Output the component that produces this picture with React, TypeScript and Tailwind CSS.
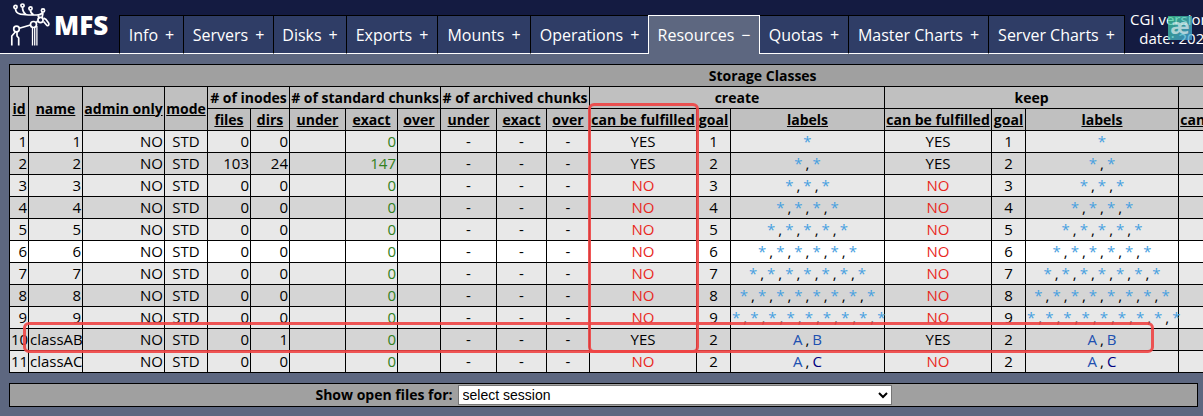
import clsx from "clsx";

interface Tab {
  name: string;
  width: string;
  active?: boolean;
}

interface StorageClass {
  id: number;
  name: string;
  files: number;
  dirs: number;
  exact: number;
  fulfilled: boolean;
  labels: string[];
}

const TABS: Tab[] = [
  { name: "Info", width: "w-[64px]" },
  { name: "Servers", width: "w-[90px]" },
  { name: "Disks", width: "w-[73px]" },
  { name: "Exports", width: "w-[91px]" },
  { name: "Mounts", width: "w-[93px]" },
  { name: "Operations", width: "w-[118px]" },
  { name: "Resources", width: "w-[112px]", active: true },
  { name: "Quotas", width: "w-[88px]" },
  { name: "Master Charts", width: "w-[140px]" },
  { name: "Server Charts", width: "w-[137px]" },
];

const stars = (n: number): string[] => Array(n).fill("*");

const CLASSES: StorageClass[] = [
  { id: 1, name: "1", files: 0, dirs: 0, exact: 0, fulfilled: true, labels: stars(1) },
  { id: 2, name: "2", files: 103, dirs: 24, exact: 147, fulfilled: true, labels: stars(2) },
  { id: 3, name: "3", files: 0, dirs: 0, exact: 0, fulfilled: false, labels: stars(3) },
  { id: 4, name: "4", files: 0, dirs: 0, exact: 0, fulfilled: false, labels: stars(4) },
  { id: 5, name: "5", files: 0, dirs: 0, exact: 0, fulfilled: false, labels: stars(5) },
  { id: 6, name: "6", files: 0, dirs: 0, exact: 0, fulfilled: false, labels: stars(6) },
  { id: 7, name: "7", files: 0, dirs: 0, exact: 0, fulfilled: false, labels: stars(7) },
  { id: 8, name: "8", files: 0, dirs: 0, exact: 0, fulfilled: false, labels: stars(8) },
  { id: 9, name: "9", files: 0, dirs: 0, exact: 0, fulfilled: false, labels: stars(9) },
  { id: 10, name: "classAB", files: 0, dirs: 1, exact: 0, fulfilled: true, labels: ["A", "B"] },
  { id: 11, name: "classAC", files: 0, dirs: 0, exact: 0, fulfilled: false, labels: ["A", "C"] },
];

const HOVERED_ID = 6;

const LABEL_COLORS: Record<string, string> = {
  "*": "text-[#47a0e0]",
  A: "text-[#2050b0]",
  B: "text-[#2050b0]",
  C: "text-[#000080]",
};

const COLUMNS = [
  "w-[19px]", "w-[54px]", "w-[82px]", "w-[43px]", "w-[43px]", "w-[39px]",
  "w-[56px]", "w-[52px]", "w-[43px]", "w-[56px]", "w-[50px]", "w-[43px]",
  "w-[107px]", "w-[34px]", "w-[154px]",
  "w-[107px]", "w-[34px]", "w-[153px]",
  "w-[107px]", "w-[34px]", "w-[154px]", "w-[42px]",
];

function Logo() {
  return (
    <div className="flex w-[119px] shrink-0 items-center pb-1 pl-[10px] text-white">
      <svg width="41" height="44" viewBox="0 0 41 44" fill="none" stroke="currentColor" strokeWidth="1.7">
        <circle cx="5.5" cy="4" r="1.6" />
        <circle cx="12.5" cy="2.600" r="1.6" />
        <circle cx="20.5" cy="5.500" r="1.6" />
        <circle cx="33" cy="7.500" r="1.6" />
        <path d="M5.500 5.600c0 3 2 5 5 5.600l8 .8h8c3 0 5-.8 6.200-2.800M12.500 4.300c0 3 1 5.500 3.500 7.200M20.500 7.200c0 2 1 3.500 3 4.500" />
        <path d="M28 12.500l1.500 3M33 10l-1 5M26 20l1.500-2M33.500 18.500l3.500 4c1.500.6 2.500-.8 1.600-2.500L36 16.500l-2.500-1.500" />
        <circle cx="30.500" cy="17" r="2.600" />
        <circle cx="23.500" cy="21.500" r="3" />
        <circle cx="6.500" cy="26" r="2.800" />
        <path d="M9.300 25.200L20.500 22M5.500 28.700L1.800 33v9.500M7 29v4l1.700 2v7.500" />
        <path strokeWidth="1.3" d="M22.500 24.500V42.500M24.700 24.500V42.500M26.900 23v19.500" />
      </svg>
      <span className="ml-[3px] text-[26px] leading-[32px] font-extrabold">MFS</span>
    </div>
  );
}

function Header() {
  return (
    <header className="flex h-[54px] overflow-hidden bg-[#141b41] font-medium text-white">
      <div className="flex border-b border-white">
        <Logo />
      </div>
      <nav className="flex shrink-0 pt-[15px]">
        {TABS.map((tab) => (
          <button
            key={tab.name}
            className={clsx(
              "flex shrink-0 items-center justify-center gap-[7px] border-t text-[16px] leading-[36px] whitespace-nowrap",
              tab.width,
              tab.active
                ? "border-x border-white bg-[#5d6780]"
                : "border-t-black border-b border-b-white bg-[#2f3d66] [&:not(:nth-child(8))]:border-l [&:not(:nth-child(8))]:border-l-black last:border-r last:border-r-black"
            )}
          >
            <span>{tab.name}</span>
            <span>{tab.active ? "−" : "+"}</span>
          </button>
        ))}
      </nav>
      <div className="flex-1 border-b border-white pt-[10px] pl-[5px]">
        <div className="relative w-max text-center text-[15px] leading-[19px]">
          CGI version:
          <br />
          date: 202
          <span className="absolute top-[6px] left-[38px] h-6 w-6 bg-linear-to-br from-[#3ecf8e]/75 to-[#4aa8e0]/75 text-[21px] leading-[21px] font-bold text-white/60">
            æ
          </span>
        </div>
      </div>
    </header>
  );
}

function Labels({ labels }: { labels: string[] }) {
  return (
    <>
      {labels.map((label, i) => (
        <span key={i}>
          {i > 0 && <span className="mx-[3px]">,</span>}
          <span className={LABEL_COLORS[label]}>{label}</span>
        </span>
      ))}
    </>
  );
}

function SortHeader({ title, rowSpan }: { title: string; rowSpan?: number }) {
  return (
    <th rowSpan={rowSpan} className="border border-black bg-[#c0c0c0] p-0">
      <a href="#" className="underline">{title}</a>
    </th>
  );
}

function GroupHeader({ title, colSpan }: { title: string; colSpan: number }) {
  return (
    <th colSpan={colSpan} className="border border-black bg-[#c0c0c0] p-0">
      {title}
    </th>
  );
}

function Placement({ item }: { item: StorageClass }) {
  return (
    <>
      <td className={clsx("text-center", !item.fulfilled && "text-[#e8281e]")}>
        {item.fulfilled ? "YES" : "NO"}
      </td>
      <td className="text-center">{item.labels.length}</td>
      <td className="text-center">
        <Labels labels={item.labels} />
      </td>
    </>
  );
}

function ClassRow({ item }: { item: StorageClass }) {
  return (
    <tr
      className={clsx(
        "h-[22px] [&>td]:border [&>td]:border-black [&>td]:px-px [&>td]:pt-0 [&>td]:pb-[2px]",
        item.id === HOVERED_ID ? "bg-white" : "odd:bg-[#e8e8e8] even:bg-[#d5d5d5]"
      )}
    >
      <td className="text-right">{item.id}</td>
      <td className="text-right">{item.name}</td>
      <td className="text-right">NO</td>
      <td className="text-center">STD</td>
      <td className="text-right">{item.files}</td>
      <td className="text-right">{item.dirs}</td>
      <td />
      <td className="text-right text-[#338020]">{item.exact}</td>
      <td />
      <td className="text-center">-</td>
      <td className="text-center">-</td>
      <td className="text-center">-</td>
      <Placement item={item} />
      <Placement item={item} />
      <Placement item={item} />
      <td />
    </tr>
  );
}

function StorageClasses() {
  return (
    <div className="relative w-max">
      <table className="w-[1507px] table-fixed border-collapse text-[15px] leading-[18px] whitespace-nowrap text-black">
        <colgroup>
          {COLUMNS.map((width, i) => (
            <col key={i} className={width} />
          ))}
        </colgroup>
        <thead className="text-[14px]">
          <tr className="h-[22px]">
            <th colSpan={22} className="border border-black bg-[#a0a0a0] p-0">Storage Classes</th>
          </tr>
          <tr className="h-[22px]">
            <SortHeader title="id" rowSpan={2} />
            <SortHeader title="name" rowSpan={2} />
            <SortHeader title="admin only" rowSpan={2} />
            <SortHeader title="mode" rowSpan={2} />
            <GroupHeader title="# of inodes" colSpan={2} />
            <GroupHeader title="# of standard chunks" colSpan={3} />
            <GroupHeader title="# of archived chunks" colSpan={3} />
            <GroupHeader title="create" colSpan={3} />
            <GroupHeader title="keep" colSpan={3} />
            <GroupHeader title="archive" colSpan={4} />
          </tr>
          <tr className="h-[22px]">
            {["files", "dirs", "under", "exact", "over", "under", "exact", "over"].map((title, i) => (
              <SortHeader key={i} title={title} />
            ))}
            {["create", "keep", "archive"].flatMap((group) =>
              ["can be fulfilled", "goal", "labels"].map((title) => (
                <SortHeader key={group + title} title={title} />
              ))
            )}
            <SortHeader title="days" />
          </tr>
        </thead>
        <tbody className="font-medium">
          {CLASSES.map((item) => (
            <ClassRow key={item.id} item={item} />
          ))}
        </tbody>
      </table>
      {/* Highlight frames */}
      <div className="pointer-events-none absolute top-[39px] left-[579px] h-[250px] w-[111px] rounded-md border-3 border-[#ee4444]/90" />
      <div className="pointer-events-none absolute top-[258px] left-[14px] h-[31px] w-[1131px] rounded-md border-3 border-[#ee4444]/90" />
    </div>
  );
}

export default function App() {
  return (
    <div className="min-h-screen overflow-hidden bg-[#5d6780] font-['Open_Sans',sans-serif]">
      <Header />
      <main className="pt-[10px] pb-[10px] pl-[9px]">
        <StorageClasses />
        <div className="mt-[10px] mr-[5px] flex h-6 items-center justify-center gap-[5px] border border-black bg-[#a0a0a0]">
          <label htmlFor="session" className="text-[14px] leading-[20px] font-bold">
            Show open files for:
          </label>
          <select
            id="session"
            className="h-5 w-[434px] border border-[#767676] bg-white font-['Liberation_Sans',sans-serif] text-[14px] leading-[18px] text-black"
          >
            <option>select session</option>
          </select>
        </div>
      </main>
    </div>
  );
}
